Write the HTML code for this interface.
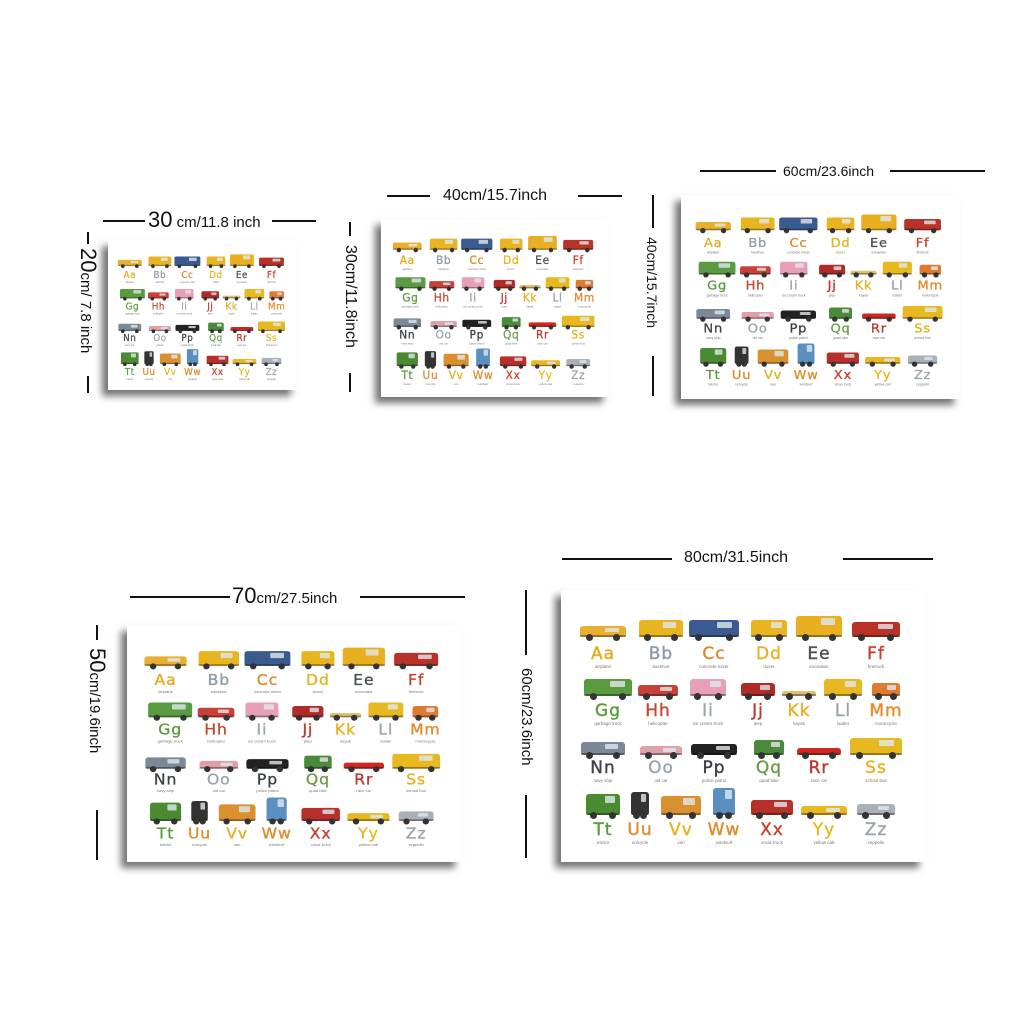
<!DOCTYPE html>
<html><head><meta charset="utf-8"><style>
body{margin:0;width:1024px;height:1024px;background:#fff;position:relative;overflow:hidden;font-family:"Liberation Sans",sans-serif}
.p{position:absolute;background:#fff;box-shadow:-6px 6px 7px rgba(0,0,0,.55)}
.in{position:absolute;left:0;top:0;width:364px;height:272px;transform-origin:0 0}
.cell{position:absolute;width:60px;text-align:center}
.L{font-weight:normal;font-size:17px;line-height:16px;letter-spacing:1px;font-family:"DejaVu Sans","Liberation Sans",sans-serif;-webkit-text-stroke:0.4px currentColor}
.c{font-size:4.5px;color:#777;line-height:6px;margin-top:2px;white-space:nowrap}
.v{position:absolute}
.hl{position:absolute;height:2px;background:#111}
.vl{position:absolute;width:2px;background:#111}
.lab{position:absolute;color:#111;font-size:15px;white-space:nowrap;line-height:20px}
.lab b{font-weight:normal;font-size:22px}
.vt{position:absolute;color:#111;font-size:15px;white-space:nowrap;transform:rotate(90deg);transform-origin:0 0;line-height:20px}
.vt b{font-weight:normal;font-size:22px}
</style></head><body>

<div class="hl" style="left:103px;top:220px;width:42px"></div>
<div class="hl" style="left:272px;top:220px;width:44px"></div>
<div class="lab" style="left:148px;top:210px"><b>30</b> cm/11.8 inch</div>

<div class="vl" style="left:87px;top:232px;height:12px"></div>
<div class="vl" style="left:87px;top:376px;height:17px"></div>
<div class="vt" style="left:98px;top:248px"><b>20</b>cm/ 7.8 inch</div>

<div class="vl" style="left:349px;top:222px;height:14px"></div>
<div class="vl" style="left:349px;top:373px;height:19px"></div>
<div class="vt" style="left:360px;top:245px;font-size:16px">30cm/11.8inch</div>

<div class="hl" style="left:387px;top:195px;width:43px"></div>
<div class="hl" style="left:578px;top:195px;width:44px"></div>
<div class="lab" style="left:443px;top:186px;font-size:16px">40cm/15.7inch</div>

<div class="vl" style="left:652px;top:195px;height:33px"></div>
<div class="vl" style="left:652px;top:356px;height:40px"></div>
<div class="vt" style="left:662px;top:237px;font-size:14px">40cm/15.7inch</div>

<div class="hl" style="left:700px;top:170px;width:76px"></div>
<div class="hl" style="left:890px;top:170px;width:95px"></div>
<div class="lab" style="left:783px;top:161px;font-size:14px">60cm/23.6inch</div>

<div class="hl" style="left:130px;top:596px;width:100px"></div>
<div class="hl" style="left:360px;top:596px;width:105px"></div>
<div class="lab" style="left:232px;top:586px"><b>70</b>cm/27.5inch</div>

<div class="vl" style="left:96px;top:625px;height:15px"></div>
<div class="vl" style="left:96px;top:810px;height:50px"></div>
<div class="vt" style="left:107px;top:648px"><b>50</b>cm/19.6inch</div>

<div class="hl" style="left:562px;top:558px;width:110px"></div>
<div class="hl" style="left:843px;top:558px;width:90px"></div>
<div class="lab" style="left:684px;top:548px;font-size:16px">80cm/31.5inch</div>

<div class="vl" style="left:525px;top:590px;height:65px"></div>
<div class="vl" style="left:525px;top:795px;height:63px"></div>
<div class="vt" style="left:536px;top:668px;font-size:15px">60cm/23.6inch</div>

<div class="p" style="left:108px;top:240px;width:189px;height:150px"><div class="in" style="transform:scale(0.519,0.551)"></div></div>
<div class="p" style="left:381px;top:219px;width:228px;height:178px"><div class="in" style="transform:scale(0.626,0.654)"></div></div>
<div class="p" style="left:681px;top:195px;width:279px;height:204px"><div class="in" style="transform:scale(0.767,0.75)"></div></div>
<div class="p" style="left:127px;top:625px;width:334px;height:237px"><div class="in" style="transform:scale(0.918,0.871)"></div></div>
<div class="p" style="left:561px;top:590px;width:364px;height:272px"><div class="in"></div></div>

<script>
var items=[
["Aa","#e8a81c","airplane","#e8b030",46,14],["Bb","#8d9aa8","backhoe","#e8b420",44,20],["Cc","#e0862a","concrete mixer","#3a5a90",50,20],["Dd","#e6b422","dozer","#e8b420",36,20],["Ee","#4a4f55","excavator","#e8b020",46,24],["Ff","#c8402a","firetruck","#b83228",48,18],
["Gg","#5a9a3a","garbage truck","#5a9a40",48,20],["Hh","#c24a30","helicopter","#c84038",40,14],["Ii","#9aa4ad","ice cream truck","#e8a0b8",36,20],["Jj","#c0392b","jeep","#b02a28",34,16],["Kk","#e8b020","kayak","#e0c070",34,8],["Ll","#9aa4ad","loader","#e8b820",38,20],["Mm","#e8892a","motorcycle","#e07a30",28,16],
["Nn","#3d4248","navy ship","#7a8898",44,16],["Oo","#9aa4ad","old car","#e0a0a8",42,12],["Pp","#3a3f45","police patrol","#222",46,14],["Qq","#6aa04a","quad bike","#4a8a3a",30,18],["Rr","#b83a2a","race car","#d02820",44,10],["Ss","#e8b020","school bus","#e8b820",52,20],
["Tt","#5a9a3a","tractor","#4a8a30",34,24],["Uu","#e08a2a","unicycle","#333",18,26],["Vv","#e6b020","van","#d89030",40,22],["Ww","#e08a2a","windsurf","#5a90c0",22,30],["Xx","#c8402a","xmas truck","#b8302a",42,18],["Yy","#e8b822","yellow cab","#e8b820",46,12],["Zz","#9aa4ad","zeppelin","#aab0b8",38,14]
];
var cols=[42,100,153,208,258,315];
var rows=[[40,64],[99,121],[158,178],[218,240]];
var html="";
items.forEach(function(it,i){
 var r,c;
 if(i<6){r=0;c=i;}else if(i<13){r=1;c=i-6;}else if(i<19){r=2;c=i-13;}else{r=3;c=i-19;}
 var cx;
 if(r==1){cx=[47,97,147,197,238,282,325][c];}
 else if(r==3){cx=[42,79,120,163,211,263,315][c];}
 else cx=cols[c];
 var w=it[4],h=it[5],vy=rows[r][0];
 var x=cx-w/2,y=vy+10-h;
 html+='<div class="v" style="left:'+x+'px;top:'+y+'px;width:'+w+'px;height:'+(h-3)+'px;background:'+it[3]+';border-radius:3px"></div>';
 if(h>11) html+='<div class="v" style="left:'+(x+w*0.55)+'px;top:'+(y+2)+'px;width:'+(w*0.3)+'px;height:'+(h*0.3)+'px;background:#dfe8ee;opacity:.8;border-radius:1px"></div>';
 html+='<div class="v" style="left:'+x+'px;top:'+(vy+5)+'px;width:'+w+'px;height:2px;background:rgba(0,0,0,.35)"></div>';
 html+='<div class="v" style="left:'+(x+w*0.12)+'px;top:'+(vy+4)+'px;width:7px;height:7px;border-radius:50%;background:#333"></div>';
 html+='<div class="v" style="left:'+(x+w*0.88-7)+'px;top:'+(vy+4)+'px;width:7px;height:7px;border-radius:50%;background:#333"></div>';
 html+='<div class="cell" style="left:'+(cx-30)+'px;top:'+(rows[r][1]-8)+'px"><div class="L" style="color:'+it[1]+'">'+it[0]+'</div><div class="c">'+it[2]+'</div></div>';
});
document.querySelectorAll('.in').forEach(function(e){e.innerHTML=html;});
</script>
</body></html>
